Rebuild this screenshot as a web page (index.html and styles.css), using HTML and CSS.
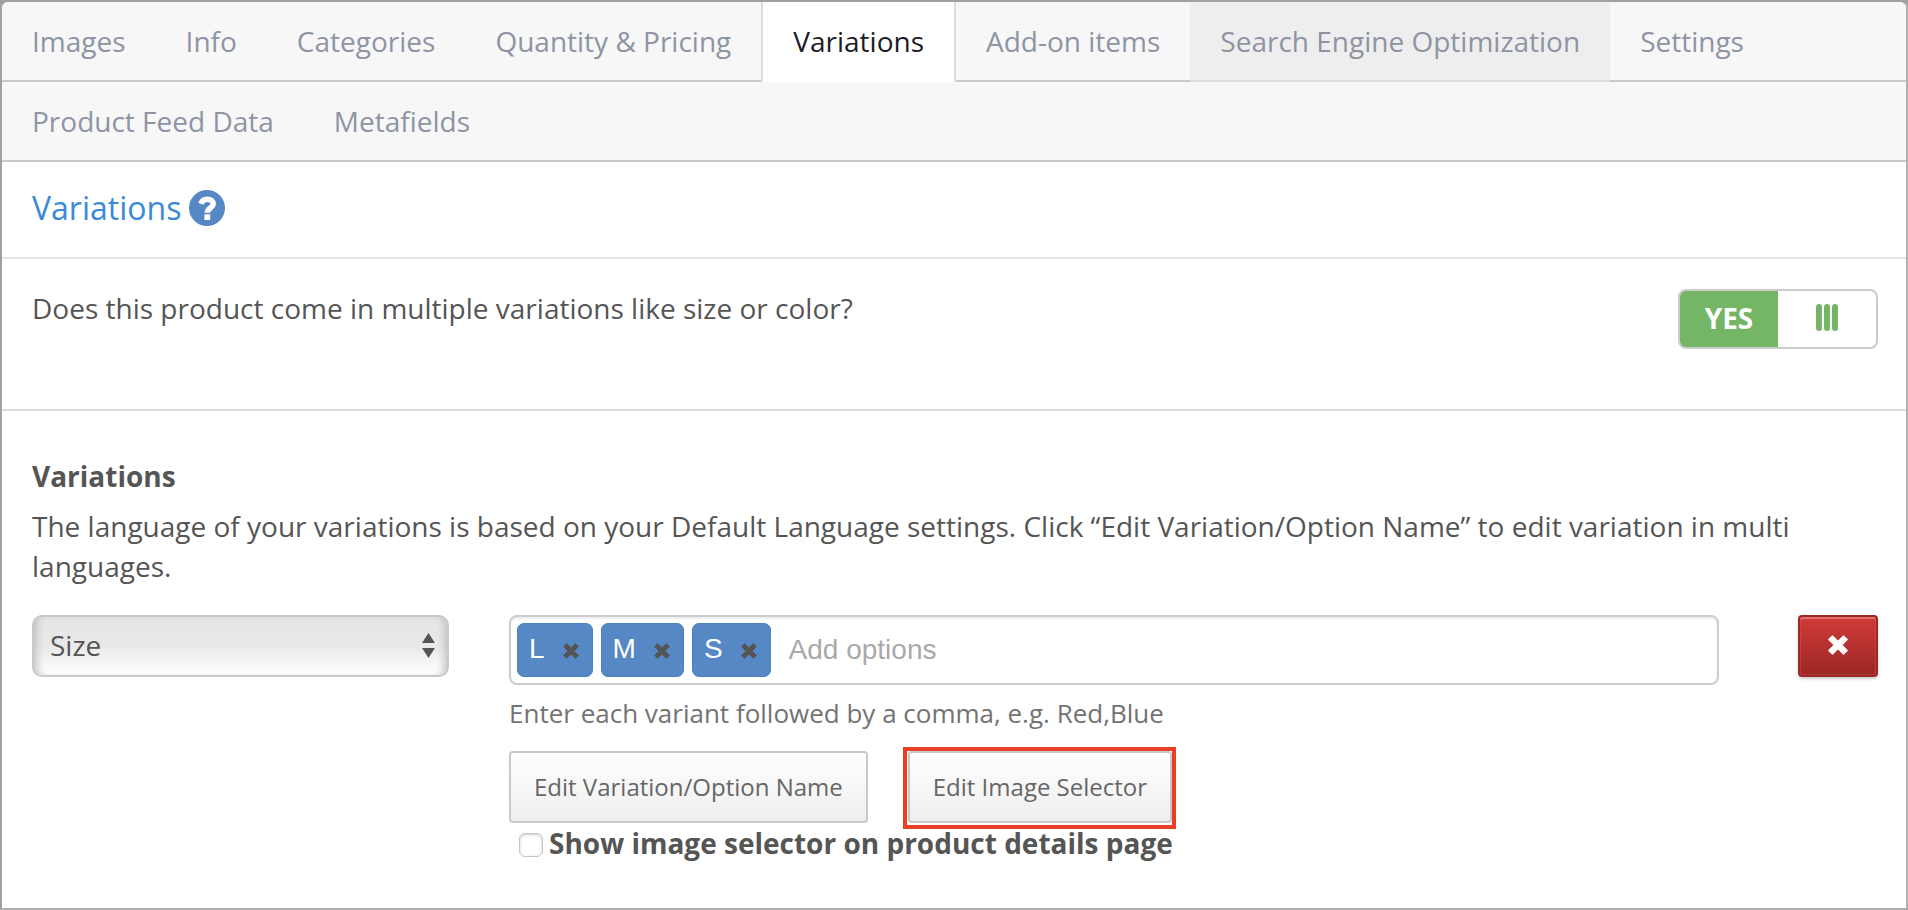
FILE: index.html
```html
<!DOCTYPE html>
<html lang="en">
<head>
<meta charset="utf-8">
<meta name="viewport" content="width=device-width, initial-scale=1">
<title>Product Variations</title>
<link rel="stylesheet" href="styles.css">
</head>
<body>
<svg class="sprite" aria-hidden="true">
  <symbol id="cross" viewBox="0 0 20 20">
    <path d="M4.500 .8 10 6.300 15.500 .8 19.200 4.500 13.700 10 19.200 15.500 15.500 19.200 10 13.700 4.500 19.200 .8 15.500 6.300 10 .8 4.500Z" stroke-linejoin="round" stroke-width="1.200" stroke="currentColor" fill="currentColor"/>
  </symbol>
</svg>
<div class="panel">
  <nav class="tabs">
    <a class="tab" href="#images">Images</a>
    <a class="tab" href="#info">Info</a>
    <a class="tab" href="#categories">Categories</a>
    <a class="tab" href="#pricing">Quantity &amp; Pricing</a>
    <a class="tab tab-active" href="#variations" aria-current="page">Variations</a>
    <a class="tab" href="#addons">Add-on items</a>
    <a class="tab tab-hover" href="#seo">Search Engine Optimization</a>
    <a class="tab" href="#settings">Settings</a>
    <a class="tab" href="#feed">Product Feed Data</a>
    <a class="tab" href="#metafields">Metafields</a>
  </nav>

  <main>
    <header class="title-bar">
      <h1 class="title">Variations</h1>
      <a class="help" href="#help" aria-label="Help">
        <svg class="help-icon" viewBox="0 0 36 36" aria-hidden="true">
          <circle cx="18" cy="18" r="18" fill="#5588c5"/>
          <path d="M11.800 13.800C13 10.600 15 9.200 18.200 9.200c3.500 0 6 1.900 6 4.600 0 4.200-5.900 4.200-5.900 8.900" fill="none" stroke="#fff" stroke-width="5.400"/>
          <path d="M15.400 24.300h5.800v5.800h-5.800z" fill="#fff"/>
        </svg>
      </a>
    </header>

    <section class="question">
      <p class="question-text" id="question">Does this product come in multiple variations like size or color?</p>
      <button class="toggle" type="button" role="switch" aria-checked="true" aria-labelledby="question">
        <span class="toggle-on">YES</span>
        <span class="toggle-grip"><i class="bar"></i><i class="bar"></i><i class="bar"></i></span>
      </button>
    </section>

    <section class="variations">
      <h2 class="subtitle">Variations</h2>
      <p class="intro">The language of your variations is based on your Default Language settings. Click “Edit Variation/Option Name” to edit variation in multi languages.</p>
      <div class="variation-row">
        <div class="select-wrap">
          <select class="select" aria-label="Variation type"><option>Size</option><option>Color</option></select>
          <svg class="select-arrows" viewBox="0 0 13 25" aria-hidden="true"><path d="M6.500 0 13 10H0ZM6.500 25 13 15H0Z" fill="#555"/></svg>
        </div>
        <div class="options">
          <div class="token-field">
            <span class="token">L<button class="token-remove" type="button" aria-label="Remove L"><svg class="token-icon"><use href="#cross"/></svg></button></span>
            <span class="token">M<button class="token-remove" type="button" aria-label="Remove M"><svg class="token-icon"><use href="#cross"/></svg></button></span>
            <span class="token">S<button class="token-remove" type="button" aria-label="Remove S"><svg class="token-icon"><use href="#cross"/></svg></button></span>
            <input class="token-input" type="text" placeholder="Add options" aria-label="Add options">
          </div>
          <p class="hint">Enter each variant followed by a comma, e.g. Red,Blue</p>
          <div class="actions">
            <button class="button" type="button">Edit Variation/Option Name</button>
            <span class="highlight"><button class="button" type="button">Edit Image Selector</button></span>
          </div>
          <label class="check-label"><input class="check" type="checkbox">Show image selector on product details page</label>
        </div>
        <button class="delete" type="button" aria-label="Delete variation"><svg class="delete-icon"><use href="#cross"/></svg></button>
      </div>
    </section>
  </main>
</div>
</body>
</html>
```
FILE: styles.css
```css
* {
  box-sizing: border-box;
}

body {
  margin: 0;
  color: #555;
  font: 28px/40px "Open Sans", sans-serif;
  background: #a1a1a1;
}

h1, h2, p {
  margin: 0;
}

button, input, select {
  font: inherit;
  color: inherit;
  margin: 0;
}

.sprite {
  display: none;
}

.panel {
  min-height: 100vh;
  border: 2px solid #a1a1a1;
  border-right-color: #b0b0b0;
  border-bottom-color: #b0b0b0;
  border-radius: 8px 8px 0 0;
  background: #fff;
  overflow: hidden;
}

.tabs {
  display: flex;
  flex-wrap: wrap;
  background: repeating-linear-gradient(#f7f7f7 0 78px, #c9c9c9 78px 80px);
}

.tab {
  height: 80px;
  padding: 19px 30px 21px;
  color: #8e94a3;
  text-decoration: none;
}

.tab-active {
  border: solid #ddd;
  border-width: 0 2px;
  background: #fff;
  color: #1c1c24;
}

.tab-hover {
  background: #eee;
  border-bottom: 2px solid #ddd;
}

.title-bar {
  display: flex;
  align-items: center;
  gap: 8px;
  height: 97px;
  padding: 0 28px 3px 30px;
  border-bottom: 2px solid #e5e5e5;
}

.title {
  color: #3a8ad9;
  font-size: 32px;
  font-weight: 400;
}

.help,
.help-icon {
  display: block;
  width: 36px;
  height: 36px;
}

.question {
  display: flex;
  justify-content: space-between;
  align-items: flex-start;
  padding: 30px 28px 60px 30px;
  border-bottom: 2px solid #ddd;
}

.question-text {
  line-height: 38px;
}

.toggle {
  display: flex;
  width: 200px;
  height: 60px;
  padding: 0;
  border: 2px solid #ccc;
  border-radius: 8px;
  background: #fff;
  overflow: hidden;
}

.toggle-on,
.toggle-grip {
  display: flex;
  flex: 1;
  height: 100%;
  align-items: center;
  justify-content: center;
  padding-bottom: 2px;
}

.toggle-on {
  background: #74b566;
  color: #fff;
  font-weight: 700;
}

.toggle-grip {
  gap: 2px;
}

.bar {
  width: 6px;
  height: 27px;
  margin-bottom: 2px;
  border-radius: 3px;
  background: #74b566;
}

.variations {
  padding: 45px 28px 30px 30px;
}

.subtitle {
  margin-bottom: 10px;
  font-size: 28px;
  font-weight: 700;
}

.variation-row {
  display: grid;
  grid-template-columns: 417fr 1229fr 80px;
  column-gap: 60px;
  align-items: start;
  margin-top: 29px;
}

.select-wrap {
  position: relative;
}

.select {
  width: 100%;
  height: 62px;
  padding: 0 16px 2px;
  border: 2px solid #c9c9c9;
  border-radius: 10px;
  appearance: none;
  background: linear-gradient(#e5e5e5, #e9e9e9 50%, #fff);
  box-shadow: inset 8px 0 8px -6px #bbb, inset -8px 0 8px -6px #bbb;
}

.select-arrows {
  position: absolute;
  right: 14px;
  top: 18px;
  width: 13px;
  height: 25px;
  pointer-events: none;
}

.options {
  min-width: 0;
  padding-right: 19px;
}

.token-field {
  display: flex;
  gap: 8px;
  height: 70px;
  padding: 6px;
  border: 2px solid #ccc;
  border-radius: 8px;
  box-shadow: inset 0 2px 2px #eee;
  font-family: "Liberation Sans", sans-serif;
}

.token {
  display: flex;
  align-items: center;
  height: 54px;
  padding: 0 13px 2px 11px;
  border: 1px solid #4a7fc0;
  border-radius: 7px;
  background: #5588c5;
  color: #fff;
}

.token-remove {
  display: flex;
  margin-left: 18px;
  padding: 4px 0 0;
  border: 0;
  background: none;
  color: #555;
}

.token-icon {
  width: 16px;
  height: 16px;
}

.token-input {
  flex: 1;
  min-width: 0;
  padding: 0 10px;
  border: 0;
  outline: 0;
  background: none;
}

.token-input::placeholder {
  color: #a9a9a9;
  opacity: 1;
}

.hint {
  margin-top: 8px;
  color: #737373;
  font-size: 26px;
}

.actions {
  display: flex;
  flex-wrap: wrap;
  align-items: flex-start;
  gap: 35px;
  margin-top: 14px;
}

.button {
  display: block;
  height: 72px;
  padding: 0 23px 1px;
  border: 2px solid #c9c9c9;
  border-radius: 4px;
  background: linear-gradient(#fff, #eee);
  color: #666;
  font-size: 24px;
  line-height: 40px;
}

.actions > .button {
  margin-top: 4px;
}

.highlight {
  padding: 0 0 2px 1px;
  border: 4px solid #e93f25;
}

.check-label {
  display: flex;
  align-items: center;
  gap: 6px;
  width: fit-content;
  padding-left: 10px;
  line-height: 28px;
  font-weight: 700;
}

.check {
  appearance: none;
  width: 24px;
  height: 24px;
  margin-top: 4px;
  border: 1px solid #c4c4c4;
  border-radius: 6px;
  background: #fff;
  box-shadow: inset 0 1px 3px #ccc;
}

.delete {
  display: flex;
  align-items: center;
  justify-content: center;
  height: 62px;
  padding: 0 0 2px;
  border: 2px solid #9c2725;
  border-radius: 4px;
  background: linear-gradient(#d03b38, #9c2725);
  box-shadow: inset 0 2px 1px #e07371, inset 0 0 2px #d65c59, 0 2px 3px #ccc;
  color: #fff;
}

.delete-icon {
  width: 20px;
  height: 20px;
}
```
